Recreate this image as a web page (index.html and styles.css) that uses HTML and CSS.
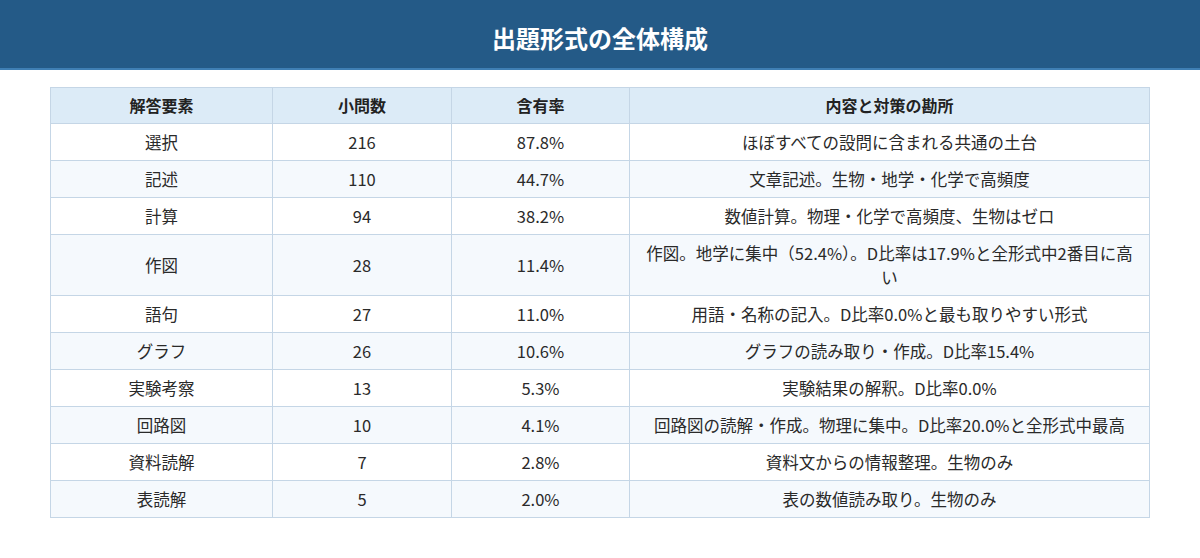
FILE: index.html
```html
<!DOCTYPE html>
<html lang="ja">
<head>
<meta charset="utf-8">
<title>出題形式の全体構成</title>
<link rel="stylesheet" href="styles.css">
</head>
<body>
<header class="page-header">
  <h1 class="page-title">出題形式の全体構成</h1>
</header>
<main class="content">
  <table class="summary">
    <colgroup>
      <col class="c1"><col class="c2"><col class="c3"><col class="c4">
    </colgroup>
    <thead>
      <tr><th>解答要素</th><th>小問数</th><th>含有率</th><th>内容と対策の勘所</th></tr>
    </thead>
    <tbody>
      <tr><td>選択</td><td>216</td><td>87.8%</td><td>ほぼすべての設問に含まれる共通の土台</td></tr>
      <tr><td>記述</td><td>110</td><td>44.7%</td><td>文章記述。生物・地学・化学で高頻度</td></tr>
      <tr><td>計算</td><td>94</td><td>38.2%</td><td>数値計算。物理・化学で高頻度、生物はゼロ</td></tr>
      <tr><td>作図</td><td>28</td><td>11.4%</td><td>作図。地学に集中（52.4%）。D比率は17.9%と全形式中2番目に高い</td></tr>
      <tr><td>語句</td><td>27</td><td>11.0%</td><td>用語・名称の記入。D比率0.0%と最も取りやすい形式</td></tr>
      <tr><td>グラフ</td><td>26</td><td>10.6%</td><td>グラフの読み取り・作成。D比率15.4%</td></tr>
      <tr><td>実験考察</td><td>13</td><td>5.3%</td><td>実験結果の解釈。D比率0.0%</td></tr>
      <tr><td>回路図</td><td>10</td><td>4.1%</td><td>回路図の読解・作成。物理に集中。D比率20.0%と全形式中最高</td></tr>
      <tr><td>資料読解</td><td>7</td><td>2.8%</td><td>資料文からの情報整理。生物のみ</td></tr>
      <tr><td>表読解</td><td>5</td><td>2.0%</td><td>表の数値読み取り。生物のみ</td></tr>
    </tbody>
  </table>
</main>
</body>
</html>
```

FILE: styles.css
```css
* { box-sizing: border-box; }
html, body {
  margin: 0;
  padding: 0;
  background: #ffffff;
  font-family: "Noto Sans CJK JP", "Noto Sans", sans-serif;
  color: #333333;
}
.page-header {
  background: #245a87;
  border-bottom: 2px solid #3f7fb4;
  padding: 20px 0 12px;
  text-align: center;
}
.page-title {
  margin: 0;
  font-size: 24px;
  line-height: 36px;
  font-weight: 700;
  color: #ffffff;
}
.content {
  padding-top: 17px;
}
.summary {
  width: 1099px;
  margin: 0 auto;
  border-collapse: collapse;
  table-layout: fixed;
  font-size: 16.5px;
  line-height: 24px;
}
.c1 { width: 222px; }
.c2 { width: 179px; }
.c3 { width: 178px; }
.c4 { width: 520px; }
.summary th,
.summary td {
  border: 1px solid #c5d6e6;
  padding: 6px 12px;
  text-align: center;
  vertical-align: middle;
}
.summary th {
  background: #dcebf7;
  color: #222222;
  font-weight: 700;
  font-size: 16px;
  padding: 5px 12px 6px;
}
.summary tbody tr:nth-child(even) td {
  background: #f5f9fd;
}
.summary td {
  color: #2a2a2a;
}
```
